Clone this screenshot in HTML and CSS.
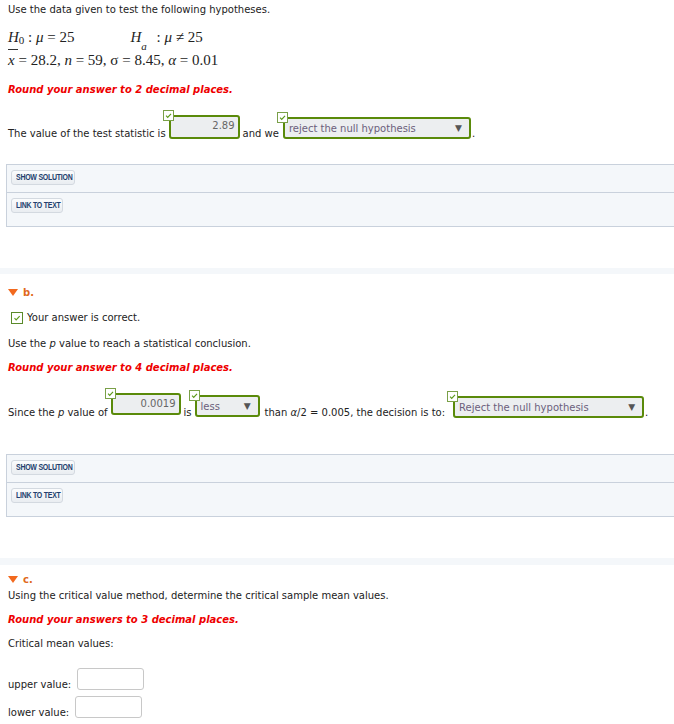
FILE: index.html
```html
<!DOCTYPE html>
<html>
<head>
<meta charset="utf-8">
<link rel="stylesheet" href="styles.css">
</head>
<body>
<div class="page">
  <section class="part part-a">
    <p class="txt intro">Use the data given to test the following hypotheses.</p>
    <div class="math">
      <div class="mline"><span class="hyp"><i>H</i><sub class="s0">0</sub> : <i>μ</i> = 25</span><span class="hyp ha"><i>H</i><sub class="sa"><i>a</i></sub> : <i>μ</i> ≠ 25</span></div>
      <div class="mline"><span class="xbar"><i>x</i></span> = 28.2, <i>n</i> = 59, σ = 8.45, <i>α</i> = 0.01</div>
    </div>
    <p class="txt red">Round your answer to 2 decimal places.</p>
    <div class="arow row-a">
      <span class="txt">The value of the test statistic is</span>
      <span class="fld w71"><span class="chk"><svg viewBox="0 0 10 10"><path d="M2.3 5.2 L4.1 7 L7.8 3.2" /></svg></span><span class="box num">2.89</span></span>
      <span class="txt">and we</span>
      <span class="fld w188 sel"><span class="chk"><svg viewBox="0 0 10 10"><path d="M2.3 5.2 L4.1 7 L7.8 3.2" /></svg></span><span class="box pick"><span class="pv">reject the null hypothesis</span><span class="arr">▼</span></span></span>
      <span class="txt dot">.</span>
    </div>
    <div class="panel pan-a">
      <div class="prow"><span class="btn bw-show"><span class="bt">SHOW SOLUTION</span></span></div>
      <div class="prow last"><span class="btn bw-link"><span class="bt">LINK TO TEXT</span></span></div>
    </div>
  </section>

  <div class="band"></div>

  <section class="part part-b">
    <div class="phead"><span class="tri"></span><span class="plabel">b.</span></div>
    <div class="correct"><span class="okbox"><svg viewBox="0 0 12 12"><path d="M3 6.2 L5 8.2 L9.2 3.8" /></svg></span><span class="txt">Your answer is correct.</span></div>
    <p class="txt p-use">Use the <i class="pv-i">p</i> value to reach a statistical conclusion.</p>
    <p class="txt red r-b">Round your answer to 4 decimal places.</p>
    <div class="arow row-b">
      <span class="txt">Since the <i class="pv-i">p</i> value of</span>
      <span class="fld w70 up3"><span class="chk"><svg viewBox="0 0 10 10"><path d="M2.3 5.2 L4.1 7 L7.8 3.2" /></svg></span><span class="box num">0.0019</span></span>
      <span class="txt">is</span>
      <span class="fld w65 up1 sel"><span class="chk"><svg viewBox="0 0 10 10"><path d="M2.3 5.2 L4.1 7 L7.8 3.2" /></svg></span><span class="box pick"><span class="pv">less</span><span class="arr">▼</span></span></span>
      <span class="txt than">than <i class="pv-i">α</i>/2 = 0.005, the decision is to:</span>
      <span class="fld w191 sel dec"><span class="chk"><svg viewBox="0 0 10 10"><path d="M2.3 5.2 L4.1 7 L7.8 3.2" /></svg></span><span class="box pick"><span class="pv">Reject the null hypothesis</span><span class="arr">▼</span></span></span>
      <span class="txt dot">.</span>
    </div>
    <div class="panel pan-b">
      <div class="prow"><span class="btn bw-show"><span class="bt">SHOW SOLUTION</span></span></div>
      <div class="prow last"><span class="btn bw-link"><span class="bt">LINK TO TEXT</span></span></div>
    </div>
  </section>

  <div class="band band-2"></div>

  <section class="part part-c">
    <div class="phead c-head"><span class="tri"></span><span class="plabel">c.</span></div>
    <p class="txt c-use">Using the critical value method, determine the critical sample mean values.</p>
    <p class="txt red r-c">Round your answers to 3 decimal places.</p>
    <p class="txt c-crit">Critical mean values:</p>
    <div class="vrow v-up"><span class="txt">upper value:</span><span class="vin w67"></span></div>
    <div class="vrow v-lo"><span class="txt">lower value:</span><span class="vin w67"></span></div>
  </section>
</div>
</body>
</html>
```

FILE: styles.css
```css
html, body {
  margin: 0;
  padding: 0;
  background: #ffffff;
  overflow: hidden;
}
body {
  font-family: "DejaVu Sans", Verdana, sans-serif;
  font-size: 10px;
  color: #222222;
}
.page {
  padding-left: 8px;
}
.txt {
  margin: 0;
  line-height: 12px;
  white-space: nowrap;
}
p.txt { display: block; }
.intro { padding-top: 4px; }

.math {
  margin-top: 10px;
  font-family: "Liberation Serif", "Times New Roman", serif;
  font-size: 15px;
  color: #222;
}
.mline {
  height: 22px;
  line-height: 22px;
  white-space: nowrap;
}
.mline + .mline { margin-top: 1px; }
.hyp { display: inline-block; }
.ha { margin-left: 56px; }
.s0 { font-size: 11px; vertical-align: -2px; }
.sa { font-size: 11px; vertical-align: -8px; margin-right: 6px; }
.xbar {
  display: inline-block;
  position: relative;
}
.xbar::before {
  content: "";
  position: absolute;
  left: 0;
  top: 0;
  width: 10px;
  height: 1px;
  background: #333;
}

.red {
  color: #ee0000;
  font-weight: bold;
  font-style: italic;
  margin-top: 13px;
}

.arow {
  display: flex;
  align-items: flex-end;
  white-space: nowrap;
}
.row-a { margin-top: 19px; gap: 3px; }
.row-a .txt { line-height: 11px; }
.fld {
  position: relative;
  display: inline-block;
}
.chk {
  position: absolute;
  left: -6px;
  top: -5px;
  width: 9px;
  height: 9px;
  border: 1px solid #7aa048;
  background: #ffffff;
  z-index: 2;
}
.chk svg {
  display: block;
  width: 9px;
  height: 9px;
  fill: none;
  stroke: #5c9a1a;
  stroke-width: 1.3;
}
.box {
  display: block;
  box-sizing: border-box;
  border: 2px solid #5a8a0a;
  border-radius: 3px;
  background: #eceef0;
  color: #666666;
  height: 24px;
}
.num {
  text-align: right;
  padding: 3px 3px 0 0;
  line-height: 12px;
}
.sel .box { height: 22px; }
.pick {
  display: flex;
  align-items: center;
  justify-content: space-between;
  padding: 0 7px 0 4px;
  color: #6b5f7c;
}
.arr {
  color: #555;
  font-size: 9px;
}
.w71 { width: 71px; }
.w188 { width: 188px; }
.w70 { width: 70px; }
.w65 { width: 65px; }
.w191 { width: 191px; }
.row-a .fld.w188 { margin-left: 1px; }
.dot { margin-left: -2px; }

.panel {
  margin-left: -2px;
  margin-right: -20px;
  border: 1px solid #c9d1dc;
  background: #f4f7fa;
}
.pan-a { margin-top: 25px; }
.prow {
  height: 28px;
  padding: 5px 0 0 4px;
  box-sizing: border-box;
  border-bottom: 1px solid #c9d1dc;
}
.prow.last {
  border-bottom: none;
  height: 33px;
}
.btn {
  display: inline-block;
  box-sizing: border-box;
  height: 15px;
  line-height: 13px;
  padding: 0 0 0 4px;
  border: 1px solid #d3d9e0;
  border-radius: 3px;
  background: linear-gradient(#fbfcfd, #e9edf1);
  color: #233f6e;
  font-family: "Liberation Sans", Arial, sans-serif;
  font-size: 8.5px;
  font-weight: bold;
  letter-spacing: -0.3px;
  white-space: nowrap;
  overflow: hidden;
}
.bt {
  display: inline-block;
  transform: scaleX(0.82);
  transform-origin: 0 50%;
}
.bw-show { width: 64px; }
.bw-link { width: 52px; }

.band {
  height: 6px;
  background: #f4f7fa;
  margin: 41px 0 0 -8px;
}
.band-2 { height: 7px; }

.phead {
  display: flex;
  align-items: center;
  margin-top: 12px;
  height: 12px;
}
.tri {
  width: 0;
  height: 0;
  border-left: 5.5px solid transparent;
  border-right: 5.5px solid transparent;
  border-top: 7px solid #f2691e;
  margin-right: 5px;
}
.plabel {
  color: #e0691c;
  font-weight: bold;
  font-size: 10px;
}
.correct {
  display: flex;
  align-items: center;
  margin-top: 14px;
  margin-left: 3px;
  height: 12px;
}
.okbox {
  width: 10px;
  height: 10px;
  border: 1px solid #5a8a2a;
  background: #fff;
  margin-right: 4px;
}
.okbox svg {
  display: block;
  width: 10px;
  height: 10px;
  fill: none;
  stroke: #5c9a1a;
  stroke-width: 1.4;
}
.p-use { margin-top: 14px; }
.pv-i { font-style: italic; }
.r-b { margin-top: 12px; }
.row-b { margin-top: 19px; gap: 3px; }
.row-b .txt { line-height: 11px; }
.row-b .than { margin-left: 2px; }
.row-b .dec { margin-left: 5px; }
.up3 { margin-bottom: 3px; }
.up1 { margin-bottom: 1px; }
.row-b .w70 .box { height: 22px; }
.pan-b { margin-top: 36px; }

.c-head { margin-top: 8px; }
.c-use { margin-top: 5px; }
.r-c { margin-top: 12px; }
.c-crit { margin-top: 12px; }
.vrow {
  display: flex;
  align-items: flex-end;
  gap: 6px;
}
.vrow .txt { line-height: 11px; }
.v-up { margin-top: 18px; }
.v-lo { margin-top: 6px; }
.vin {
  display: block;
  box-sizing: border-box;
  height: 22px;
  border: 1px solid #c8c8c8;
  border-radius: 3px;
  background: #fff;
}
.w67 { width: 67px; }
```
